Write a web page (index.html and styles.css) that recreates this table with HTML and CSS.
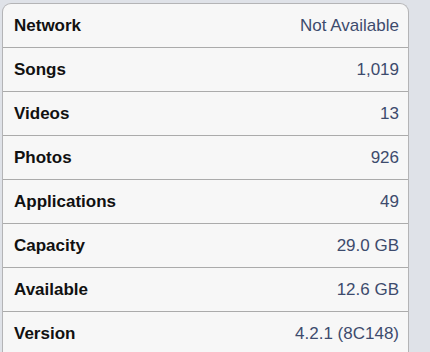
FILE: index.html
```html
<!DOCTYPE html>
<html lang="en">
<head>
    <meta charset="UTF-8">
    <meta name="viewport" content="width=device-width, initial-scale=1.0">
    <title>About</title>
    <link rel="stylesheet" href="styles.css">
</head>
<body>
    <div class="info-table">
        <div class="info-row"><span class="label">Network</span><span class="value">Not Available</span></div>
        <div class="info-row"><span class="label">Songs</span><span class="value">1,019</span></div>
        <div class="info-row"><span class="label">Videos</span><span class="value">13</span></div>
        <div class="info-row"><span class="label">Photos</span><span class="value">926</span></div>
        <div class="info-row"><span class="label">Applications</span><span class="value">49</span></div>
        <div class="info-row"><span class="label">Capacity</span><span class="value">29.0 GB</span></div>
        <div class="info-row"><span class="label">Available</span><span class="value">12.6 GB</span></div>
        <div class="info-row"><span class="label">Version</span><span class="value">4.2.1 (8C148)</span></div>
    </div>
</body>
</html>
```

FILE: styles.css
```css
body {
    margin: 0;
    padding: 3px 0 0 2px;
    background-color: #dfe2e8;
    font-family: "Liberation Sans", Arial, sans-serif;
    height: 352px;
    box-sizing: border-box;
    overflow: hidden;
}
.info-table {
    width: 405px;
    background: #f7f7f7;
    border: 1px solid #b4b4b6;
    border-bottom: none;
    border-radius: 9px 9px 0 0;
}
.info-row {
    display: flex;
    align-items: center;
    justify-content: space-between;
    height: 43px;
    padding: 0 9px 0 11px;
    border-bottom: 1px solid #ababab;
}
.label {
    font-size: 17px;
    font-weight: bold;
    color: #111;
}
.value {
    font-size: 17px;
    color: #3d4b6d;
}
```
